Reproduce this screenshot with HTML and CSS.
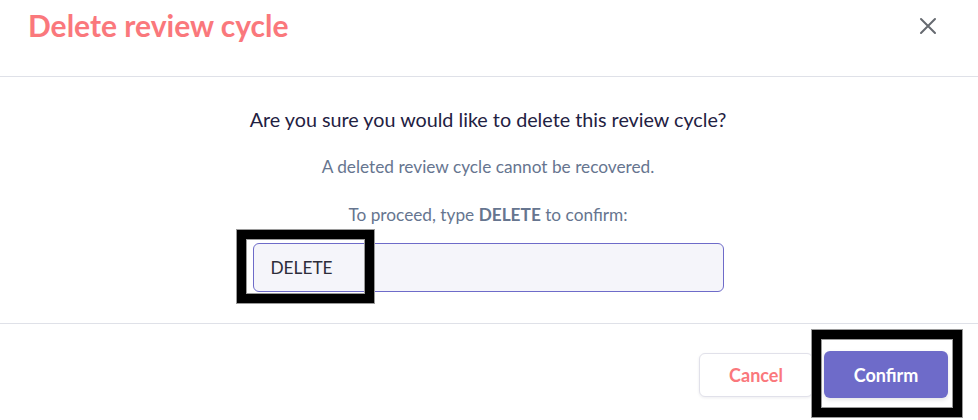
FILE: index.html
```html
<!DOCTYPE html>
<html lang="en">
<head>
<meta charset="utf-8">
<title>Delete review cycle</title>
<link rel="stylesheet" href="styles.css">
</head>
<body>
<div class="modal">
  <header class="modal-header">
    <h1 class="modal-title">Delete review cycle</h1>
    <button class="close-btn" aria-label="Close">
      <svg width="20" height="20" viewBox="0 0 20 20"><path d="M3 3 L17 17 M17 3 L3 17" stroke="#666a70" stroke-width="2" stroke-linecap="round" fill="none"/></svg>
    </button>
  </header>
  <section class="modal-body">
    <p class="question">Are you sure you would like to delete this review cycle?</p>
    <p class="note">A deleted review cycle cannot be recovered.</p>
    <p class="note prompt">To proceed, type <strong>DELETE</strong> to confirm:</p>
    <div class="input-wrap">
      <input class="confirm-input" type="text" value="DELETE">
      <span class="mark mark-input"></span>
    </div>
  </section>
  <footer class="modal-footer">
    <button class="btn btn-cancel">Cancel</button>
    <div class="confirm-wrap">
      <button class="btn btn-confirm">Confirm</button>
      <span class="mark mark-confirm"></span>
    </div>
  </footer>
</div>
</body>
</html>
```

FILE: styles.css
```css
* { box-sizing: border-box; }
html, body { margin: 0; padding: 0; background: #fff; }
body { font-family: Lato, "Noto Sans", sans-serif; width: 978px; height: 420px; overflow: hidden; }

.modal { width: 978px; height: 420px; display: flex; flex-direction: column; }

.modal-header {
  height: 77px;
  border-bottom: 1px solid #dfe1e8;
  display: flex;
  justify-content: space-between;
  align-items: flex-start;
  padding: 7px 40px 0 28px;
}
.modal-title {
  margin: 0;
  font-size: 30px;
  line-height: 36px;
  font-weight: 700;
  color: #fa787c;
}
.close-btn {
  margin-top: 9px;
  width: 20px; height: 20px;
  padding: 0; border: 0; background: none;
  display: flex;
}

.modal-body {
  height: 247px;
  border-bottom: 1px solid #dfe1e8;
  display: flex;
  flex-direction: column;
  align-items: center;
  padding: 30.5px 2px 0 0;
}
.question {
  margin: 0;
  font-size: 19.75px;
  line-height: 23.7px;
  color: #1f2142;
}
.note {
  margin: 25.8px 0 0;
  font-size: 17.25px;
  line-height: 20.7px;
  color: #66758f;
}
.prompt { margin-top: 27.3px; }
.prompt strong { font-weight: 700; }

.input-wrap { position: relative; margin-top: 17.3px; }
.confirm-input {
  display: block;
  width: 471px;
  height: 49px;
  border: 1px solid #6e6bc9;
  border-radius: 6px;
  background: #f5f5fa;
  padding: 0 17px;
  font-family: Lato, sans-serif;
  font-size: 17.25px;
  color: #2d2d3a;
  outline: none;
}

.mark {
  position: absolute;
  border: 9px solid #000;
  box-shadow: 0 0 0 1px #9a9a9a, inset 0 0 0 1px #9a9a9a;
  pointer-events: none;
}
.mark-input { left: -16px; top: -13px; width: 137px; height: 73px; }

.modal-footer {
  flex: 1;
  display: flex;
  justify-content: flex-end;
  align-items: center;
  gap: 11px;
  padding: 5px 30px 0 0;
}
.btn {
  font-family: Lato, sans-serif;
  font-size: 18px;
  font-weight: 700;
  border-radius: 6px;
  cursor: pointer;
}
.btn-cancel {
  width: 114px; height: 44px;
  background: #fff;
  color: #fa787c;
  border: 1px solid #e1e1ea;
  box-shadow: 0 1px 3px rgba(30, 30, 60, 0.08);
}
.confirm-wrap { position: relative; }
.btn-confirm {
  display: block;
  width: 124px; height: 47px;
  background: #6e6bc9;
  color: #fff;
  border: 0;
  box-shadow: 0 2px 4px rgba(30, 30, 60, 0.12);
}
.mark-confirm { left: -12px; top: -21px; width: 150px; height: 87px; }
```
